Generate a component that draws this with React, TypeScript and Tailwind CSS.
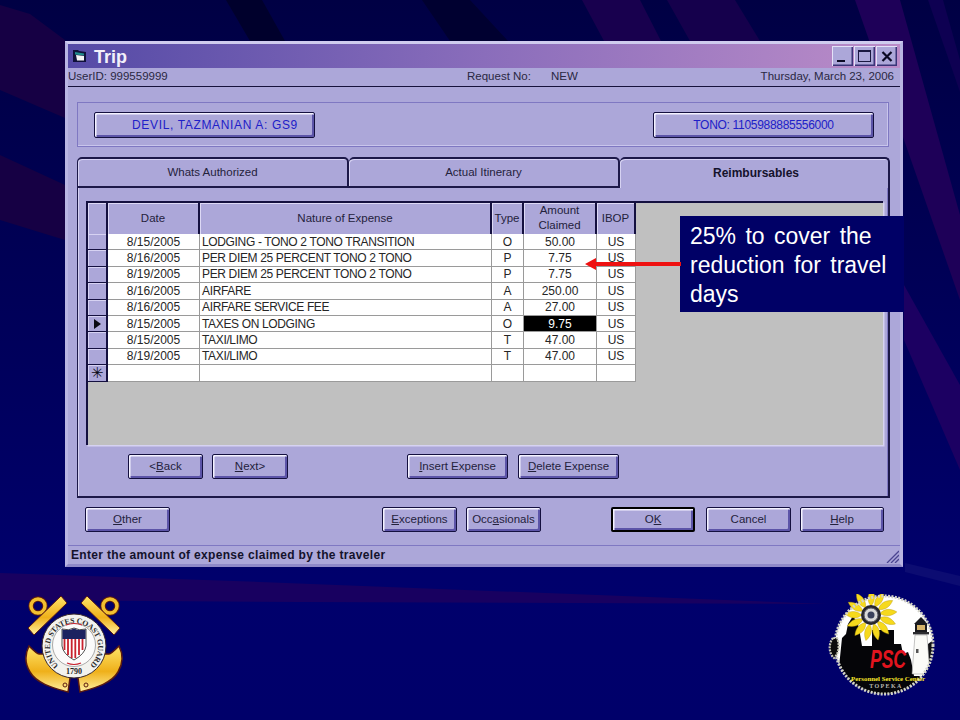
import React from 'react';

interface Row {
  date: string;
  nature: string;
  type: string;
  amount: string;
  current?: boolean;
}

const rows: Row[] = [
  { date: '8/15/2005', nature: 'LODGING - TONO 2 TONO TRANSITION', type: 'O', amount: '50.00' },
  { date: '8/16/2005', nature: 'PER DIEM 25 PERCENT TONO 2 TONO', type: 'P', amount: '7.75' },
  { date: '8/19/2005', nature: 'PER DIEM 25 PERCENT TONO 2 TONO', type: 'P', amount: '7.75' },
  { date: '8/16/2005', nature: 'AIRFARE', type: 'A', amount: '250.00' },
  { date: '8/16/2005', nature: 'AIRFARE SERVICE FEE', type: 'A', amount: '27.00' },
  { date: '8/15/2005', nature: 'TAXES ON LODGING', type: 'O', amount: '9.75', current: true },
  { date: '8/15/2005', nature: 'TAXI/LIMO', type: 'T', amount: '47.00' },
  { date: '8/19/2005', nature: 'TAXI/LIMO', type: 'T', amount: '47.00' },
];

const bevel =
  'flex items-center justify-center rounded-[2px] border border-[#14103f] bg-[#aca7d9] shadow-[inset_1.5px_1.5px_0_#f4f2ff,inset_-2px_-2px_0_#5c54a8] text-[11.5px] text-[#24223c]';

const WinButton = ({ className, children }: { className: string; children: React.ReactNode }) => (
  <div className={`${bevel} ${className}`}>{children}</div>
);

const Background = () => (
  <svg className="absolute inset-0" width="960" height="720" viewBox="0 0 960 720">
    <defs>
      <linearGradient id="bg" x1="0" y1="0" x2="0" y2="1">
        <stop offset="0" stopColor="#000044" />
        <stop offset="0.5" stopColor="#00005c" />
        <stop offset="0.8" stopColor="#00006c" />
        <stop offset="1" stopColor="#00006a" />
      </linearGradient>
    </defs>
    <rect width="960" height="720" fill="url(#bg)" />
    <polygon points="0,5 30,14 65,40 65,118 0,90" fill="#160044" />
    <polygon points="0,155 65,185 65,240 0,220" fill="#160044" />
    <polygon points="226,0 262,0 285,41 250,41" fill="#00002c" />
    <polygon points="422,0 470,0 508,41 450,41" fill="#000030" />
    <polygon points="582,0 640,0 661,41 604,41" fill="#18004e" />
    <polygon points="667,0 735,0 760,41 690,41" fill="#15004c" />
    <polygon points="855,0 900,0 960,215 960,300" fill="#1e0058" />
    <polygon points="928,0 943,0 960,60 960,92" fill="#0e0052" />
    <polygon points="904,285 960,385 960,470 904,340" fill="#1c0062" />
    <polygon points="905,563 960,576 960,586 905,572" fill="#0c0c72" />
    <polygon points="0,573 260,582 827,604 300,602 0,600" fill="#180060" />
  </svg>
);

const CoastGuardLogo = () => (
  <svg width="104" height="100" viewBox="0 0 104 100">
    <defs>
      <linearGradient id="gold" x1="0" y1="0" x2="0" y2="1">
        <stop offset="0" stopColor="#ffe46a" />
        <stop offset="0.55" stopColor="#efb01a" />
        <stop offset="1" stopColor="#fff0a0" />
      </linearGradient>
      <path id="sealArc" d="M 34.5 71.5 A 24 24 0 1 1 65.5 71.5" />
    </defs>
    {/* anchor stocks and rings */}
    <g fill="none">
      <circle cx="14" cy="12" r="7" stroke="#5b1b10" strokeWidth="5.5" />
      <circle cx="14" cy="12" r="7" stroke="#f2c030" strokeWidth="3.5" />
      <circle cx="86" cy="12" r="7" stroke="#5b1b10" strokeWidth="5.5" />
      <circle cx="86" cy="12" r="7" stroke="#f2c030" strokeWidth="3.5" />
    </g>
    <g stroke="#5b1b10" strokeWidth="1">
      <polygon points="4,34 37,2 43,9 10,41" fill="url(#gold)" />
      <polygon points="96,34 63,2 57,9 90,41" fill="url(#gold)" />
    </g>
    {/* flukes */}
    <path d="M5 52 C10 57 13 60 15 60 L24 60 L46 84 L44 98 C30 94 13 90 6 78 C0 68 1 60 5 52 Z" fill="url(#gold)" stroke="#5b1b10" strokeWidth="1.5" />
    <path d="M95 52 C90 57 87 60 85 60 L76 60 L54 84 L56 98 C70 94 87 90 94 78 C100 68 99 60 95 52 Z" fill="url(#gold)" stroke="#5b1b10" strokeWidth="1.5" />
    <circle cx="41" cy="91" r="2" fill="none" stroke="#5b1b10" />
    <circle cx="62" cy="91" r="2" fill="none" stroke="#5b1b10" />
    {/* seal */}
    <circle cx="50" cy="52" r="32" fill="#f2f2ee" stroke="#3a2a2a" strokeWidth="1" />
    <circle cx="50" cy="51" r="21.5" fill="#fbfbfb" stroke="#888" strokeWidth="0.7" />
    <text fontFamily="'Liberation Serif', serif" fontSize="7.8" fontWeight="700" fill="#2a2a2a">
      <textPath href="#sealArc" textLength="116" lengthAdjust="spacing">UNITED STATES COAST GUARD</textPath>
    </text>
    <text x="50" y="80" textAnchor="middle" fontFamily="'Liberation Serif', serif" fontSize="8" fontWeight="700" fill="#222">1790</text>
    {/* shield */}
    <path d="M38 35 Q45 37 50 34 Q55 37 62 35 L62 52 Q61 60 50 66 Q39 60 38 52 Z" fill="#fff" stroke="#222" strokeWidth="0.8" />
    <path d="M38.4 35.4 Q45 37 50 34.4 Q55 37 61.6 35.4 L61.6 45 L38.4 45 Z" fill="#1c2260" />
    {[40.5, 44, 47.7, 51.3, 55, 58.5].map((x, i) => (
      <rect key={x} x={x - 0.9} y="45" width="1.8" height={[11, 16, 19, 19, 16, 11][i]} fill="#c8222e" />
    ))}
    <path d="M42 31 Q50 28 58 31" fill="none" stroke="#c8222e" strokeWidth="1.2" />
    <path d="M43 69 Q50 72 57 69" fill="none" stroke="#c8222e" strokeWidth="1.2" />
  </svg>
);

const PscLogo = () => (
  <svg width="108" height="102" viewBox="0 0 108 102">
    <defs>
      <clipPath id="seal"><circle cx="56" cy="51" r="49" /></clipPath>
    </defs>
    <circle cx="56" cy="51" r="49" fill="#fff" />
    <g clipPath="url(#seal)">
      {/* skyline */}
      <path d="M8 102 L14 44 L18 40 L20 30 L25 22 L30 30 L32 40 L34 52 L44 52 L44 36 L66 36 L66 50 L73 50 L75 60 L80 58 L83 66 L86 82 L108 82 L108 102 Z" fill="#050508" />
      <path d="M100 84 L100 50 L108 44 L108 84 Z" fill="#101014" />
      {/* lighthouse */}
      <path d="M87 41 L99 41 L102 80 L84 80 Z" fill="#fbfbf8" stroke="#8a8a8a" strokeWidth="0.5" />
      <rect x="87" y="29" width="12" height="10" fill="#1a1a1e" />
      <path d="M86 30 L93 23 L100 30 Z" fill="#1a1a1e" />
      <rect x="89" y="31" width="8" height="5" fill="#d6b46a" />
      <rect x="85" y="38" width="16" height="2.4" fill="#2c2c30" />
      <rect x="88" y="55" width="2.5" height="4" fill="#555" />
    </g>
    {/* sunflower */}
    <g fill="#f6d91c" stroke="#b89a10" strokeWidth="0.4">
      {[0, 27, 54, 81, 108, 135, 162, 189, 216, 243, 270, 297, 324].map((a) => (
        <path key={a} d="M0 -9 C5 -15 4 -21 1 -26 C-3 -21 -5 -15 0 -9 Z" transform={`translate(43 21) rotate(${a})`} />
      ))}
    </g>
    <circle cx="43" cy="21" r="10" fill="#26262c" />
    <circle cx="43" cy="21" r="7" fill="#d8d8d8" stroke="#556" strokeWidth="1" />
    <circle cx="43" cy="21" r="3.5" fill="#39405c" />
    {/* rope */}
    <circle cx="56" cy="51" r="49" fill="none" stroke="#d4d4c8" strokeWidth="3" strokeDasharray="2 1.4" />
    <path d="M5 44 C0 50 1 60 6 64 C11 60 12 50 9 44 Z" fill="#0a0a0c" stroke="#c8c8b8" strokeWidth="2.2" strokeDasharray="2 1" />
    {/* labels */}
    <text x="60" y="74" textAnchor="middle" fontFamily="'Liberation Sans', sans-serif" fontSize="25" fontWeight="700" fontStyle="italic" fill="#e1141e" textLength="36" lengthAdjust="spacingAndGlyphs">PSC</text>
    <text x="60" y="86.5" textAnchor="middle" fontFamily="'Liberation Serif', serif" fontSize="6.6" fontWeight="700" fill="#f6e52a" textLength="74" lengthAdjust="spacingAndGlyphs">Personnel Service Center</text>
    <text x="58" y="94" textAnchor="middle" fontFamily="'Liberation Serif', serif" fontSize="6" fontWeight="700" fill="#b9b9b0" letterSpacing="1.4">TOPEKA</text>
  </svg>
);

const cols = 'grid grid-cols-[20px_92px_292px_32px_73px_39px] w-[548px]';
const head = 'flex items-center justify-center pb-[2px] border-r-2 border-r-[#14103f] bg-[#aca7d9] shadow-[inset_1px_1px_0_#ddd9f5] text-[11.5px] leading-[15px] text-center text-[#24223c]';
const cell = 'flex items-center justify-center border-r border-b border-[#9a9a9a] bg-white text-[12px] leading-none text-[#262626] h-[16.4px]';
const rowHead = 'flex items-center justify-center border-r-2 border-b border-r-[#14103f] border-b-[#14103f] bg-[#aca7d9] shadow-[inset_1px_1px_0_#d6d2f2] h-[16.4px]';

export default function App() {
  return (
    <div className="relative w-[960px] h-[720px] overflow-hidden bg-[#000066] font-['Liberation_Sans',Arial,sans-serif]">
      <Background />

      <div className="relative pt-[41px] pl-[65px]">
        {/* window */}
        <div className="w-[838px] h-[526px] flex flex-col border-[3px] border-[#b9b5e2] border-t-[#cfcbee] border-b-[#8f89c8] bg-[#aca7d9]">
          <div className="h-[24px] shrink-0 flex items-center bg-gradient-to-r from-[#554aa6] via-[#8a6dbb] to-[#bb8cc8] pl-[4px] pr-[3px]">
            <svg width="15" height="14" viewBox="0 0 15 14" className="shrink-0">
              <path d="M1 1 L6 1 L7 2 L14 3 L14 13 L1 13 Z" fill="#10103a" />
              <path d="M3 3 L12 4.5 L12 6.5 L3 5.5 Z" fill="#1f8c8c" />
              <path d="M4 6 L12 7 L12 11.5 L5 11.5 Z" fill="#f4f4f4" />
            </svg>
            <span className="ml-[7px] pt-[2px] text-[18px] font-bold leading-none text-[#f2f0fa]">Trip</span>
            <div className="ml-auto flex">
              {['min', 'max', 'close'].map((k) => (
                <div key={k} className="relative w-[21px] h-[20px] ml-[1px] flex items-center justify-center bg-[#aca7d9] shadow-[inset_1px_1px_0_#e4e2f8,inset_-1.5px_-1.5px_0_#3a3478]">
                  {k === 'min' && <div className="absolute left-[5px] bottom-[4px] w-[8px] h-[2px] bg-[#0c0a24]" />}
                  {k === 'max' && <div className="w-[13px] h-[12px] border border-t-2 border-[#1a1840]" />}
                  {k === 'close' && (
                    <svg width="12" height="11" viewBox="0 0 12 11">
                      <path d="M1.5 1 L10.5 10 M10.5 1 L1.5 10" stroke="#0c0a24" strokeWidth="2.2" />
                    </svg>
                  )}
                </div>
              ))}
            </div>
          </div>

          <div className="h-[19px] shrink-0 flex items-center border-b border-[#16123c] text-[11.5px] text-[#2a2842] leading-none">
            <span className="w-[399px]">UserID: 999559999</span>
            <span className="w-[84px]">Request No:</span>
            <span>NEW</span>
            <span className="ml-auto pr-[6px]">Thursday, March 23, 2006</span>
          </div>

          <div className="mt-[15px] ml-[9px] w-[812px] h-[45px] shrink-0 flex items-center justify-between pl-[16px] pr-[14px] border border-[#7f78c2] shadow-[inset_-1px_-1px_0_#c9c5ec]">
            <WinButton className="w-[221px] h-[26px] pl-[21px] !text-[#2020c8] !text-[12px] tracking-[0.65px]">DEVIL, TAZMANIAN A: GS9</WinButton>
            <WinButton className="w-[221px] h-[26px] !text-[#2020c8] !text-[12px] tracking-[-0.3px]">TONO: 1105988885556000</WinButton>
          </div>

          {/* tabs */}
          <div className="mt-[10px] ml-[9px] shrink-0 flex h-[31px]">
            <div className="w-[272px] flex items-center justify-center rounded-t-[5px] border-t-2 border-l border-r-2 border-b-2 border-[#1c1848] text-[11.5px] text-[#24223c] shadow-[inset_1px_1px_0_#d6d2f2]">Whats Authorized</div>
            <div className="w-[271px] flex items-center justify-center rounded-t-[5px] border-t-2 border-r-2 border-b-2 border-[#1c1848] text-[11.5px] text-[#24223c] shadow-[inset_1px_1px_0_#d6d2f2]">Actual Itinerary</div>
            <div className="w-[270px] flex items-center justify-center pl-[4px] pb-[1px] rounded-t-[5px] border-t-2 border-r-2 border-[#1c1848] text-[12px] font-bold text-[#14122c] shadow-[inset_1px_1px_0_#d6d2f2]">Reimbursables</div>
          </div>

          {/* tab panel */}
          <div className="ml-[9px] w-[813px] h-[310px] shrink-0 border-l border-r-2 border-b-2 border-[#1c1848] shadow-[inset_1px_0_0_#d6d2f2,inset_-1px_0_0_#7f78c2] pt-[13px] pl-[8px]">
            <div className="w-[797px] h-[244px] bg-[#c0c0c0] border-l-2 border-t-2 border-[#14103f] shadow-[1.5px_1.5px_0_#d6d2f2]">
              <div className={`${cols} h-[31px] border-b-2 border-[#14103f]`}>
                <div className={head} />
                <div className={head}>Date</div>
                <div className={head}>Nature of Expense</div>
                <div className={head}>Type</div>
                <div className={head}>Amount<br />Claimed</div>
                <div className={head}>IBOP</div>
              </div>
              {rows.map((r, i) => (
                <div key={i} className={cols}>
                  <div className={rowHead}>
                    {r.current && <div className="w-0 h-0 border-y-[5px] border-y-transparent border-l-[7px] border-l-[#0a0a14]" />}
                  </div>
                  <div className={cell}>{r.date}</div>
                  <div className={`${cell} !justify-start pl-[2px] tracking-[-0.35px]`}>{r.nature}</div>
                  <div className={cell}>{r.type}</div>
                  <div className={`${cell} ${r.current ? '!bg-black !text-white' : ''}`}>{r.amount}</div>
                  <div className={cell}>US</div>
                </div>
              ))}
              <div className={cols}>
                <div className={rowHead}>
                  <span className="text-[15px] leading-none text-[#0a0a14]">✳</span>
                </div>
                <div className={cell} />
                <div className={cell} />
                <div className={cell} />
                <div className={cell} />
                <div className={cell} />
              </div>
            </div>

            <div className="mt-[9px] flex">
              <WinButton className="ml-[42px] w-[75px] h-[25px]">&lt;<u>B</u>ack</WinButton>
              <WinButton className="ml-[9px] w-[76px] h-[25px]"><u>N</u>ext&gt;</WinButton>
              <WinButton className="ml-[119px] w-[101px] h-[25px]"><u>I</u>nsert Expense</WinButton>
              <WinButton className="ml-[10px] w-[101px] h-[25px]"><u>D</u>elete Expense</WinButton>
            </div>
          </div>

          <div className="mt-[9px] ml-[17px] shrink-0 flex">
            <WinButton className="w-[85px] h-[25px]"><u>O</u>ther</WinButton>
            <WinButton className="ml-[212px] w-[75px] h-[25px]"><u>E</u>xceptions</WinButton>
            <WinButton className="ml-[9px] w-[75px] h-[25px]">Occ<u>a</u>sionals</WinButton>
            <WinButton className="ml-[70px] w-[84px] h-[25px] border-2 !border-black">O<u>K</u></WinButton>
            <WinButton className="ml-[11px] w-[85px] h-[25px]">Cancel</WinButton>
            <WinButton className="ml-[9px] w-[84px] h-[25px]"><u>H</u>elp</WinButton>
          </div>

          <div className="relative mt-[13px] flex-1 flex items-center border-t border-[#7f78c2] pl-[3px] text-[12px] font-bold leading-none tracking-[0.32px] text-[#14122c]">
            Enter the amount of expense claimed by the traveler
            <svg className="absolute right-[1px] bottom-[1px]" width="13" height="13" viewBox="0 0 13 13">
              <path d="M1 13 L13 1 M5 13 L13 5 M9 13 L13 9" stroke="#4a4490" strokeWidth="1.3" />
            </svg>
          </div>
        </div>

        {/* logos */}
        <div className="mt-[27px] -ml-[41px] w-[912px] flex justify-between items-start">
          <CoastGuardLogo />
          <PscLogo />
        </div>
      </div>

      {/* callout over the grid */}
      <div className="absolute left-[680px] top-[216px] w-[224px] h-[96px] bg-[#000066] pl-[10px] pt-[6px] text-[23px] leading-[29px] [word-spacing:3px] text-white">
        25% to cover the reduction for travel days
      </div>
      <svg className="absolute left-[583px] top-[256px]" width="100" height="16" viewBox="0 0 100 16">
        <path d="M2 8 L13 2 L13 6 L98 6 L98 10 L13 10 L13 14 Z" fill="#ee1111" />
      </svg>
    </div>
  );
}
